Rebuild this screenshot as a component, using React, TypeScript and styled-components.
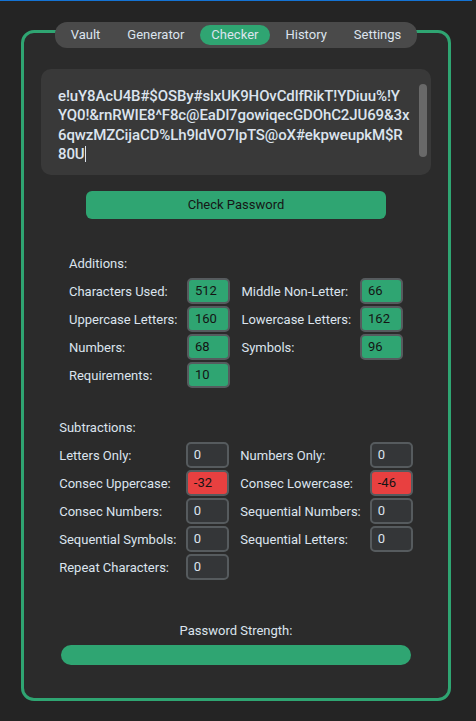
import React from "react";
import styled, { createGlobalStyle } from "styled-components";

const Global = createGlobalStyle`
  html, body { margin: 0; padding: 0; background: #242424; }
  body { font-family: Roboto, "Liberation Sans", sans-serif; }
`;

const GREEN = "#2fa572";
const TEXT = "#dce4ee";

const Page = styled.div`
  width: 472px;
  min-height: 721px;
  background: #242424;
`;

const TopLine = styled.div`
  height: 1px;
  width: 472px;
  background: #1473d4;
`;

const Tabview = styled.div`
  display: flex;
  flex-direction: column;
  align-items: center;
  padding-top: 21px;
`;

const SegBar = styled.div`
  position: relative;
  z-index: 1;
  height: 26px;
  box-sizing: border-box;
  padding: 3px 4px;
  display: flex;
  gap: 4px;
  background: #4a4a4a;
  border-radius: 12px;
`;

const Seg = styled.div<{ $active?: boolean }>`
  height: 20px;
  line-height: 20px;
  padding: 0 11.5px;
  border-radius: 10px;
  font-size: 13px;
  color: ${TEXT};
  background: ${(p) => (p.$active ? GREEN : "transparent")};
`;

const Frame = styled.div`
  margin-top: -18px;
  width: 430px;
  height: 671px;
  box-sizing: border-box;
  border: 3px solid ${GREEN};
  border-radius: 13px;
  background: #2b2b2b;
  display: flex;
  flex-direction: column;
  align-items: center;
  padding-top: 36px;
`;

const Textbox = styled.div`
  position: relative;
  width: 390px;
  height: 106px;
  box-sizing: border-box;
  background: #393939;
  border-radius: 10px;
  padding: 18px 0 0 17px;
  font-family: Roboto, "Liberation Sans", sans-serif;
  font-weight: 500;
  font-size: 15px;
  letter-spacing: -0.12px;
  line-height: 19.3px;
  color: ${TEXT};
  white-space: pre;
`;

const Caret = styled.span`
  display: inline-block;
  width: 1px;
  height: 16px;
  background: ${TEXT};
  vertical-align: -3px;
`;

const Scrollbar = styled.div`
  position: absolute;
  right: 4px;
  top: 15px;
  width: 8px;
  height: 73px;
  border-radius: 4px;
  background: #696969;
`;

const Button = styled.div`
  margin-top: 16px;
  width: 300px;
  height: 28px;
  line-height: 28px;
  border-radius: 6px;
  background: ${GREEN};
  color: #161616;
  font-size: 13px;
  text-align: center;
`;

const Grid = styled.div<{ $mt: number }>`
  margin-top: ${(p) => p.$mt}px;
  display: grid;
  grid-template-columns: auto 43px auto 43px;
  grid-auto-rows: 26px;
  row-gap: 2px;
  align-items: center;
`;

const Header = styled.div`
  grid-column: 1 / -1;
  font-size: 13px;
  color: ${TEXT};
`;

const Label = styled.div<{ $right?: boolean }>`
  font-size: 13px;
  color: ${TEXT};
  white-space: nowrap;
  padding-right: ${(p) => (p.$right ? "9px" : "9.5px")};
  padding-left: ${(p) => (p.$right ? "11.5px" : "0")};
`;

type Tone = "green" | "red" | "grey";

const Entry = styled.div<{ $tone: Tone }>`
  height: 26px;
  box-sizing: border-box;
  border: 2px solid #565b5e;
  border-radius: 5px;
  padding-left: 6px;
  font-size: 13px;
  line-height: 22px;
  background: ${(p) =>
    p.$tone === "green" ? GREEN : p.$tone === "red" ? "#e84040" : "#343638"};
  color: ${(p) => (p.$tone === "grey" ? TEXT : "#141414")};
`;

const StrengthLabel = styled.div`
  margin-top: 38px;
  height: 26px;
  line-height: 26px;
  font-size: 13px;
  color: ${TEXT};
`;

const Progress = styled.div`
  margin-top: 1px;
  width: 350px;
  height: 20px;
  border-radius: 10px;
  background: ${GREEN};
`;

type Row = [string, string, Tone][];

const additions: Row = [
  ["Characters Used:", "512", "green"],
  ["Middle Non-Letter:", "66", "green"],
  ["Uppercase Letters:", "160", "green"],
  ["Lowercase Letters:", "162", "green"],
  ["Numbers:", "68", "green"],
  ["Symbols:", "96", "green"],
  ["Requirements:", "10", "green"],
];

const subtractions: Row = [
  ["Letters Only:", "0", "grey"],
  ["Numbers Only:", "0", "grey"],
  ["Consec Uppercase:", "-32", "red"],
  ["Consec Lowercase:", "-46", "red"],
  ["Consec Numbers:", "0", "grey"],
  ["Sequential Numbers:", "0", "grey"],
  ["Sequential Symbols:", "0", "grey"],
  ["Sequential Letters:", "0", "grey"],
  ["Repeat Characters:", "0", "grey"],
];

const tabs = ["Vault", "Generator", "Checker", "History", "Settings"];

const lines = [
  "e!uY8AcU4B#$OSBy#slxUK9HOvCdlfRikT!YDiuu%!Y",
  "YQ0!&rnRWIE8^F8c@EaDl7gowiqecGDOhC2JU69&3x",
  "6qwzMZCijaCD%Lh9ldVO7lpTS@oX#ekpweupkM$R",
];

const Section = ({ title, rows, mt }: { title: string; rows: Row; mt: number }) => (
  <Grid $mt={mt}>
    <Header>{title}</Header>
    {rows.map(([label, value, tone], i) => (
      <React.Fragment key={label}>
        <Label $right={i % 2 === 1}>{label}</Label>
        <Entry $tone={tone}>{value}</Entry>
      </React.Fragment>
    ))}
  </Grid>
);

export default function App() {
  return (
    <Page>
      <Global />
      <TopLine />
      <Tabview>
        <SegBar>
          {tabs.map((t) => (
            <Seg key={t} $active={t === "Checker"}>
              {t}
            </Seg>
          ))}
        </SegBar>
        <Frame>
          <Textbox>
            {lines.join("\n")}
            {"\n80U"}
            <Caret />
            <Scrollbar />
          </Textbox>
          <Button>Check Password</Button>
          <Section title="Additions:" rows={additions} mt={31} />
          <Section title="Subtractions:" rows={subtractions} mt={26} />
          <StrengthLabel>Password Strength:</StrengthLabel>
          <Progress />
        </Frame>
      </Tabview>
    </Page>
  );
}
